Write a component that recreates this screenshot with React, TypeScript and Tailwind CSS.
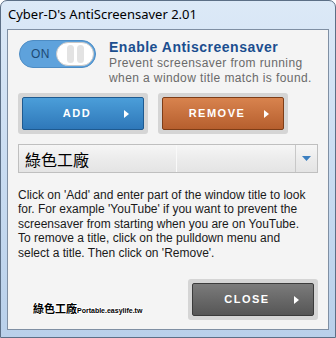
import React from 'react';

function Arrow() {
    return (
        <svg width="7" height="10" viewBox="0 0 7 10" className="absolute right-[13px] top-1/2 -translate-y-1/2">
            <path d="M1 1 L6 5 L1 9 Z" fill="#ffffff" />
        </svg>
    );
}

function ActionButton({ label, tone }: { label: string; tone: 'blue' | 'orange' | 'gray' }) {
    const inner =
        tone === 'blue'
            ? 'bg-gradient-to-b from-[#4b9ed9] to-[#2f78b9] border-[#1e5a90]'
            : tone === 'orange'
            ? 'bg-gradient-to-b from-[#d8834e] to-[#b65f2e] border-[#7e3d17]'
            : 'bg-gradient-to-b from-[#7b7b7b] to-[#565656] border-[#3b3b3b]';
    return (
        <div className="rounded-[3px] bg-[#d5d5d5] p-[4px]">
            <div className={`relative flex h-[33px] w-[122px] items-center justify-center rounded-[2px] border pr-[12px] ${inner}`}>
                <span className="text-[11px] font-bold tracking-[1.5px] text-white [font-family:'Liberation_Sans',sans-serif]">{label}</span>
                <Arrow />
            </div>
        </div>
    );
}

const helpLines = [
    "Click on 'Add' and enter part of the window title to look",
    "for. For example 'YouTube' if you want to prevent the",
    'screensaver from starting when you are on YouTube.',
    'To remove a title, click on the pulldown menu and',
    "select a title. Then click on 'Remove'."
];

export default function App() {
    return (
        <div className="relative h-[338px] w-[336px] overflow-hidden rounded-t-[7px] border border-[#5c6f86] bg-gradient-to-b from-[#dce9f7] via-[#c9dcf1] to-[#b9d0ea]">
            <div className="flex h-[28px] items-center pl-[7px] text-[13px] text-black [font-family:'Noto_Sans',sans-serif]">
                Cyber-D's AntiScreensaver 2.01
            </div>
            <div className="ml-[6px] h-[301px] w-[322px] border border-[#7f8fa3] bg-[#f4f4f4] px-[10px] [font-family:'Liberation_Sans',sans-serif]">
                <div className="mt-[10px] flex">
                    <div className="ml-px flex h-[28px] w-[77px] items-center rounded-full border border-[#4d8cc4] bg-[#5ea2dc] pl-[11px] pr-[1px]">
                        <span className="text-[12px] tracking-[0.5px] text-[#1d4a75]">ON</span>
                        <div className="ml-auto flex h-[24px] w-[38px] items-center justify-center gap-[3px] rounded-full border border-[#c8c8c8] bg-white">
                            <div className="h-[18px] w-[7px] rounded-full bg-[#e3e3e3]" />
                            <div className="h-[18px] w-[7px] rounded-full bg-[#e3e3e3]" />
                        </div>
                    </div>
                    <div className="ml-[13px] -mt-[1px]">
                        <div className="text-[14px] font-bold leading-[17px] tracking-[0.5px] text-[#1b4e8f]">Enable Antiscreensaver</div>
                        <div className="text-[12px] leading-[14.5px] tracking-[0.4px] text-[#6a6a6a]">
                            Prevent screensaver from running
                            <br />
                            when a window title match is found.
                        </div>
                    </div>
                </div>
                <div className="mt-[8px] flex gap-[10px]">
                    <ActionButton label="ADD" tone="blue" />
                    <ActionButton label="REMOVE" tone="orange" />
                </div>
                <div className="relative mt-[10px] flex h-[29px] w-[300px] items-stretch border border-[#bfbfbf] bg-gradient-to-b from-[#f6f6f6] via-[#ececec] to-[#e4e4e4]">
                    <div className="absolute left-[157px] top-0 h-full w-px bg-[#f9f9f9]" />
                    <div className="flex flex-1 items-center pl-[6px] text-[16px] text-black [font-family:'Noto_Sans_CJK_TC',sans-serif]">綠色工廠</div>
                    <div className="flex w-[22px] items-center justify-center border-l border-[#c8c8c8]">
                        <svg width="9" height="6" viewBox="0 0 9 6">
                            <path d="M0 0 L9 0 L4.5 5 Z" fill="#3b7fc0" />
                        </svg>
                    </div>
                </div>
                <div className="mt-[15px] text-[12px] leading-[14.4px] text-[#1a1a1a]">
                    {helpLines.map((line) => (
                        <div key={line} className="whitespace-nowrap">{line}</div>
                    ))}
                </div>
                <div className="mt-[19px] flex items-start">
                    <div className="ml-[15px] mt-[24px] flex items-baseline font-bold leading-none text-black [text-shadow:1px_0_0_#fff,-1px_0_0_#fff,0_1px_0_#fff,0_-1px_0_#fff]">
                        <span className="text-[11px] [font-family:'Noto_Sans_CJK_TC',sans-serif]">綠色工廠</span>
                        <span className="text-[7px]">Portable.easylife.tw</span>
                    </div>
                    <div className="ml-auto">
                        <ActionButton label="CLOSE" tone="gray" />
                    </div>
                </div>
            </div>
        </div>
    );
}
